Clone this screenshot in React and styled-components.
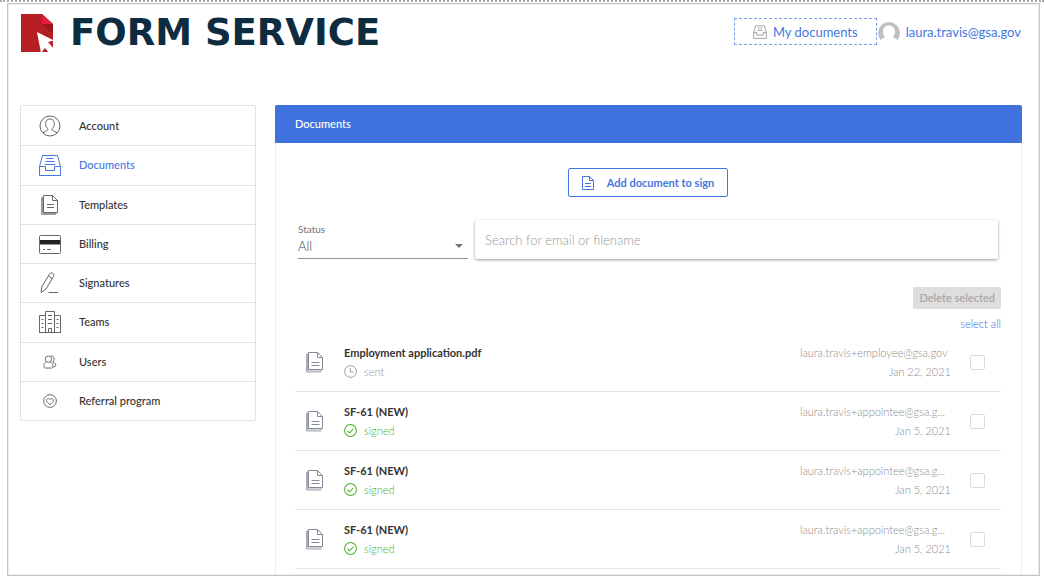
import React from 'react';
import styled, { createGlobalStyle, css } from 'styled-components';

const GlobalStyle = createGlobalStyle`
  * { box-sizing: border-box; }
  body {
    margin: 0;
    background: #fff;
    color: #333;
    font-family: Lato, "Liberation Sans", sans-serif;
    font-size: 11px;
    line-height: 16px;
  }
  button, input, select { font: inherit; }
  svg { display: block; flex: none; }
`;

const Page = styled.div`
  border-top: 2px dotted #aaa;
  padding: 1px 4px 6px 7px;
`;
const Frame = styled.div`
  border: 1px solid #c6c6c6;
  box-shadow: inset 0 0 0 1px #ececec;
  padding: 9px 17px 1px 12px;
`;
const Header = styled.header`
  display: flex;
  justify-content: space-between;
  align-items: flex-start;
  height: 92px;
`;
const Brand = styled.a`
  display: flex;
  align-items: center;
  gap: 16px;
  height: 40px;
  color: #0e2c3f;
  text-decoration: none;
  font: bold 37px/40px "DejaVu Sans", sans-serif;
`;
const UserBar = styled.div`
  display: flex;
  align-items: center;
  gap: 1px;
  padding: 5px 1px 0 0;
`;
const HeaderLink = styled.a`
  display: flex;
  align-items: center;
  gap: 6px;
  height: 27px;
  color: #4577e0;
  font-size: 13px;
  text-decoration: none;
  ${p => p.$outlined && css`
    border: 1px dashed #7c9fec;
    padding: 0 18px;
  `}
`;
const Columns = styled.div`
  display: flex;
  align-items: flex-start;
  gap: 19px;
`;
const Sidebar = styled.nav`
  display: grid;
  grid-auto-rows: 1fr;
  flex: none;
  width: 236px;
  min-height: 316px;
  border: 1px solid #e2e2e2;
  border-radius: 2px;
`;
const NavItem = styled.a`
  display: flex;
  align-items: center;
  gap: 18px;
  padding: 0 18px;
  color: ${p => (p.$active ? '#4577e0' : '#333')};
  font-weight: 500;
  text-decoration: none;
  & + & { border-top: 1px solid #e2e2e2; }
`;
const NavIcon = styled.span`
  display: flex;
  justify-content: center;
  width: 22px;
  color: ${p => (p.$active ? '#4577e0' : '#666')};
`;
const Panel = styled.main`
  flex: 1;
  min-width: 0;
  border: 1px solid #ececec;
  border-top: 0;
  border-bottom: 0;
  border-radius: 2px 2px 0 0;
`;
const PanelTitle = styled.h1`
  margin: 0 -1px;
  padding: 0 20px;
  border-radius: 2px 2px 0 0;
  background: #3f72dc;
  color: #fff;
  font-size: 11px;
  font-weight: 500;
  line-height: 38px;
`;
const PanelBody = styled.div`
  display: flex;
  flex-direction: column;
  padding: 25px 20px 5px 19px;
`;
const AddButton = styled.button`
  display: flex;
  align-items: center;
  align-self: center;
  gap: 13px;
  height: 29px;
  padding: 0 13px;
  border: 1px solid #4577e0;
  border-radius: 2px;
  background: #fff;
  color: #4577e0;
  font-weight: 700;
`;
const Filters = styled.div`
  display: flex;
  align-items: flex-end;
  gap: 7px;
  padding: 23px 3px 0;
`;
const StatusField = styled.div`
  position: relative;
  flex: none;
  width: 170px;
`;
const FieldLabel = styled.label`
  display: block;
  color: #757575;
  font-size: 10px;
  line-height: 12px;
`;
const StatusSelect = styled.select`
  display: block;
  width: 100%;
  height: 24px;
  padding: 0 0 2px;
  border: 0;
  border-bottom: 1px solid #949494;
  border-radius: 0;
  appearance: none;
  background: none;
  color: #444;
  font-size: 13px;
  font-weight: 300;
`;
const Caret = styled.svg`
  position: absolute;
  right: 5px;
  bottom: 11px;
  pointer-events: none;
`;
const Search = styled.input`
  flex: 1;
  min-width: 0;
  height: 39px;
  padding: 0 10px;
  border: 0;
  border-radius: 2px;
  background: #fff;
  box-shadow: 0 1px 3px rgba(0, 0, 0, 0.4);
  color: #333;
  font-size: 13px;
  font-weight: 300;
  &::placeholder { color: #999; opacity: 1; }
`;
const BulkActions = styled.div`
  display: flex;
  flex-direction: column;
  align-items: flex-end;
  gap: 7px;
  padding: 28px 0 1px;
`;
const DeleteButton = styled.button`
  height: 22px;
  padding: 0 6px;
  border: 0;
  border-radius: 1px;
  background: #dedede;
  color: #a8a8a8;
  font-weight: 600;
`;
const SelectAll = styled.a`
  color: #2f66dc;
  font-weight: 300;
  text-decoration: none;
`;
const DocumentList = styled.ul`
  margin: 0;
  padding: 0;
  list-style: none;
`;
const DocumentRow = styled.li`
  display: flex;
  align-items: center;
  height: 59px;
  padding: 0 16px 0 11px;
  border-bottom: 1px solid #e4e4e4;
`;
const DocumentInfo = styled.div`
  flex: 1;
  min-width: 0;
  padding-left: 20px;
`;
const DocumentName = styled.div`
  margin-bottom: 3px;
  color: #333;
  font-weight: 700;
`;
const DocumentStatus = styled.div`
  display: flex;
  align-items: center;
  gap: 7px;
  color: ${p => (p.$signed ? '#44ae22' : '#999')};
  font-weight: 300;
`;
const Recipient = styled.div`
  width: 151px;
  color: #8c8c8c;
  font-weight: 300;
  text-align: right;
`;
const Email = styled.div`
  margin-bottom: 3px;
  text-align: left;
  white-space: nowrap;
`;
const RowCheck = styled.input`
  width: 15px;
  height: 15px;
  margin: 0 0 0 19px;
  border: 1px solid #dcdcdc;
  border-radius: 2px;
  appearance: none;
  background: #fff;
`;

const Svg = ({ size = 22, children, ...rest }) => (
  <svg width={size} height={size} viewBox="0 0 22 22" fill="none" stroke="currentColor" strokeWidth="1" aria-hidden="true" {...rest}>
    {children}
  </svg>
);

const LogoMark = () => (
  <svg width="34" height="40" viewBox="0 0 34 40" aria-hidden="true">
    <path d="M1 1h21l11 10v28H1z" fill="#b51f24" />
    <path d="M22 11h11v10z" fill="#99191d" />
    <path d="M22 1l11 10H22z" fill="#e31c3d" />
    <path d="M17 19L34 27.500l-6 1.500 6 7v4h-5l-4-5-4 5z" fill="#fff" />
  </svg>
);
const AccountIcon = () => (
  <Svg>
    <circle cx="11" cy="11" r="10" />
    <path d="M4 18c1-1.500 4-1.800 4.800-3 .3-.8-.1-1.400-.8-2.300-1-1.200-1.400-2.700-1.400-4C6.600 5.700 8.500 4 11 4s4.400 1.700 4.400 4.700c0 1.300-.4 2.800-1.400 4-.7.900-1.100 1.500-.8 2.300.8 1.200 3.800 1.500 4.800 3" />
  </Svg>
);
const TrayIcon = () => (
  <Svg>
    <path d="M.5 12.500L3.500 1.500h15l3 11v9H.5zM.5 12.500h6v4h9v-4h6M7.500 4.500h7M6.500 7.500h9M5.500 10.500h11" />
  </Svg>
);
const PagesIcon = () => (
  <Svg>
    <path d="M4.500 1.500h9l5 5v12h-14zM13.500 1.500v5h5M8 10.500h7M8 13.500h7" />
    <path d="M4.500 3.500h-2v17h14l1-2M3.500 4v15.500h14" stroke="#999" />
  </Svg>
);
const CardIcon = () => (
  <Svg>
    <rect x=".5" y="2.500" width="21" height="18" rx="1" />
    <path d="M1 7h20v4.500H1z" fill="#222" stroke="none" />
    <path d="M4 16.500h2M8 16.500h4" />
  </Svg>
);
const PenIcon = () => (
  <Svg>
    <path d="M2 20.500l1-6L10.500 2c1-1.500 2.500-1.300 3.400-.7.900.6 1.200 2 .5 3.200L7 17zM9.500 4l3.800 2.500M9.500 20.500h9.500" />
  </Svg>
);
const BuildingIcon = () => (
  <Svg>
    <path d="M.5 21.500v-17h6M6.500 21.500v-21h9v21M15.500 4.500h6v17M0 21.500h22M9.500 21.500v-4h3v4" />
    <path d="M9 4.500h4M9 8.500h4M9 12.500h4M2.500 8.500h2M2.500 12.500h2M2.500 16.500h2M17.500 8.500h2M17.500 12.500h2M17.500 16.500h2" />
  </Svg>
);
const UsersIcon = () => (
  <Svg size={14} strokeWidth="1.500">
    <circle cx="8.500" cy="6.500" r="5" />
    <path d="M5.500 11c-3 1-4 3-4 6 0 2.500.5 3.500 2 3.500h10c1.500 0 2-1 2-3.500 0-3-1-5-4-6M12.500 1.500c3.500-.5 5 2 5 5 0 2-.8 3.500-2 4.500 3.500 1 4.500 3 4.500 5 0 1.500-.5 2.500-2 2.500h-2" />
  </Svg>
);
const HeartIcon = () => (
  <Svg size={14} strokeWidth="1.500">
    <circle cx="11" cy="11" r="10" />
    <path d="M11 16.500c-3-2-5.500-4-5.500-6.500C5.500 7 9.500 6 11 9c1.500-3 5.500-2 5.500 1 0 2.500-2.500 4.500-5.500 6.500z" />
  </Svg>
);
const FileIcon = () => (
  <svg width="12" height="14" viewBox="0 0 12 14" fill="none" stroke="currentColor" aria-hidden="true">
    <path d="M.5 .5h7l4 4v9H.5zM7.500 .5v4h4M3 7.500h6M3 10.500h6" />
  </svg>
);
const StackIcon = () => (
  <svg width="18" height="21" viewBox="0 0 18 21" fill="none" stroke="#858998" aria-hidden="true">
    <path d="M2.500 .5h9l5 5v12h-14zM11.500 .5v5h5M5.500 10.500h8M5.500 13.500h8" />
    <path d="M2.500 1.500h-1v17.500h14v-1.500M.5 2v18h14.500" stroke="#a9acb6" />
  </svg>
);
const ClockIcon = () => (
  <Svg size={13} strokeWidth="1.600">
    <circle cx="11" cy="11" r="10" />
    <path d="M10.500 5v7H16" />
  </Svg>
);
const CheckIcon = () => (
  <Svg size={13} strokeWidth="1.700">
    <circle cx="11" cy="11" r="10" />
    <path d="M6 11.500l3.500 3.500L16 8" />
  </Svg>
);
const Avatar = () => (
  <svg width="22" height="22" viewBox="0 0 22 22" aria-hidden="true">
    <path d="M2.500 19A11 11 0 1 1 19.500 19c-1-1-3.500-2-4.500-3 1.200-1.500 2-3 2-5.500C17 7 14.500 4.500 11 4.500s-6 2.500-6 6C5 13 5.800 14.500 7 16c-1 1-3.500 2-4.500 3z" fill="#c0c0c0" />
  </svg>
);

const navItems = [
  { label: 'Account', Icon: AccountIcon },
  { label: 'Documents', Icon: TrayIcon, active: true },
  { label: 'Templates', Icon: PagesIcon },
  { label: 'Billing', Icon: CardIcon },
  { label: 'Signatures', Icon: PenIcon },
  { label: 'Teams', Icon: BuildingIcon },
  { label: 'Users', Icon: UsersIcon },
  { label: 'Referral program', Icon: HeartIcon },
];

const documents = [
  { id: 1, name: 'Employment application.pdf', status: 'sent', email: 'laura.travis+employee@gsa.gov', date: 'Jan 22, 2021' },
  { id: 2, name: 'SF-61 (NEW)', status: 'signed', email: 'laura.travis+appointee@gsa.g...', date: 'Jan 5, 2021' },
  { id: 3, name: 'SF-61 (NEW)', status: 'signed', email: 'laura.travis+appointee@gsa.g...', date: 'Jan 5, 2021' },
  { id: 4, name: 'SF-61 (NEW)', status: 'signed', email: 'laura.travis+appointee@gsa.g...', date: 'Jan 5, 2021' },
];

export default function App() {
  return (
    <Page>
      <GlobalStyle />
      <Frame>
        <Header>
          <Brand href="#home"><LogoMark />FORM SERVICE</Brand>
          <UserBar>
            <HeaderLink href="#documents" $outlined>
              <Svg size={14} stroke="#999" strokeWidth="1.400">
                <path d="M1 12L4 1.500h14L21 12v9H1zM1 12h5v4h10v-4h5M8 5h6M7 8.500h8" />
              </Svg>
              My documents
            </HeaderLink>
            <HeaderLink href="#profile"><Avatar />laura.travis@gsa.gov</HeaderLink>
          </UserBar>
        </Header>
        <Columns>
          <Sidebar>
            {navItems.map(({ label, Icon, active }) => (
              <NavItem key={label} href={`#${label}`} $active={active}>
                <NavIcon $active={active}><Icon /></NavIcon>
                {label}
              </NavItem>
            ))}
          </Sidebar>
          <Panel>
            <PanelTitle>Documents</PanelTitle>
            <PanelBody>
              <AddButton type="button"><FileIcon />Add document to sign</AddButton>
              <Filters>
                <StatusField>
                  <FieldLabel htmlFor="status">Status</FieldLabel>
                  <StatusSelect id="status" defaultValue="All">
                    <option>All</option>
                  </StatusSelect>
                  <Caret width="8" height="4" viewBox="0 0 8 4" aria-hidden="true">
                    <path d="M0 0h8L4 4z" fill="#757575" />
                  </Caret>
                </StatusField>
                <Search type="search" aria-label="Search for email or filename" placeholder="Search for email or filename" />
              </Filters>
              <BulkActions>
                <DeleteButton type="button" disabled>Delete selected</DeleteButton>
                <SelectAll href="#select-all">select all</SelectAll>
              </BulkActions>
              <DocumentList>
                {documents.map(doc => (
                  <DocumentRow key={doc.id}>
                    <StackIcon />
                    <DocumentInfo>
                      <DocumentName>{doc.name}</DocumentName>
                      <DocumentStatus $signed={doc.status === 'signed'}>
                        {doc.status === 'signed' ? <CheckIcon /> : <ClockIcon />}
                        {doc.status}
                      </DocumentStatus>
                    </DocumentInfo>
                    <Recipient>
                      <Email>{doc.email}</Email>
                      <div>{doc.date}</div>
                    </Recipient>
                    <RowCheck type="checkbox" aria-label={`Select ${doc.name}`} />
                  </DocumentRow>
                ))}
              </DocumentList>
            </PanelBody>
          </Panel>
        </Columns>
      </Frame>
    </Page>
  );
}
